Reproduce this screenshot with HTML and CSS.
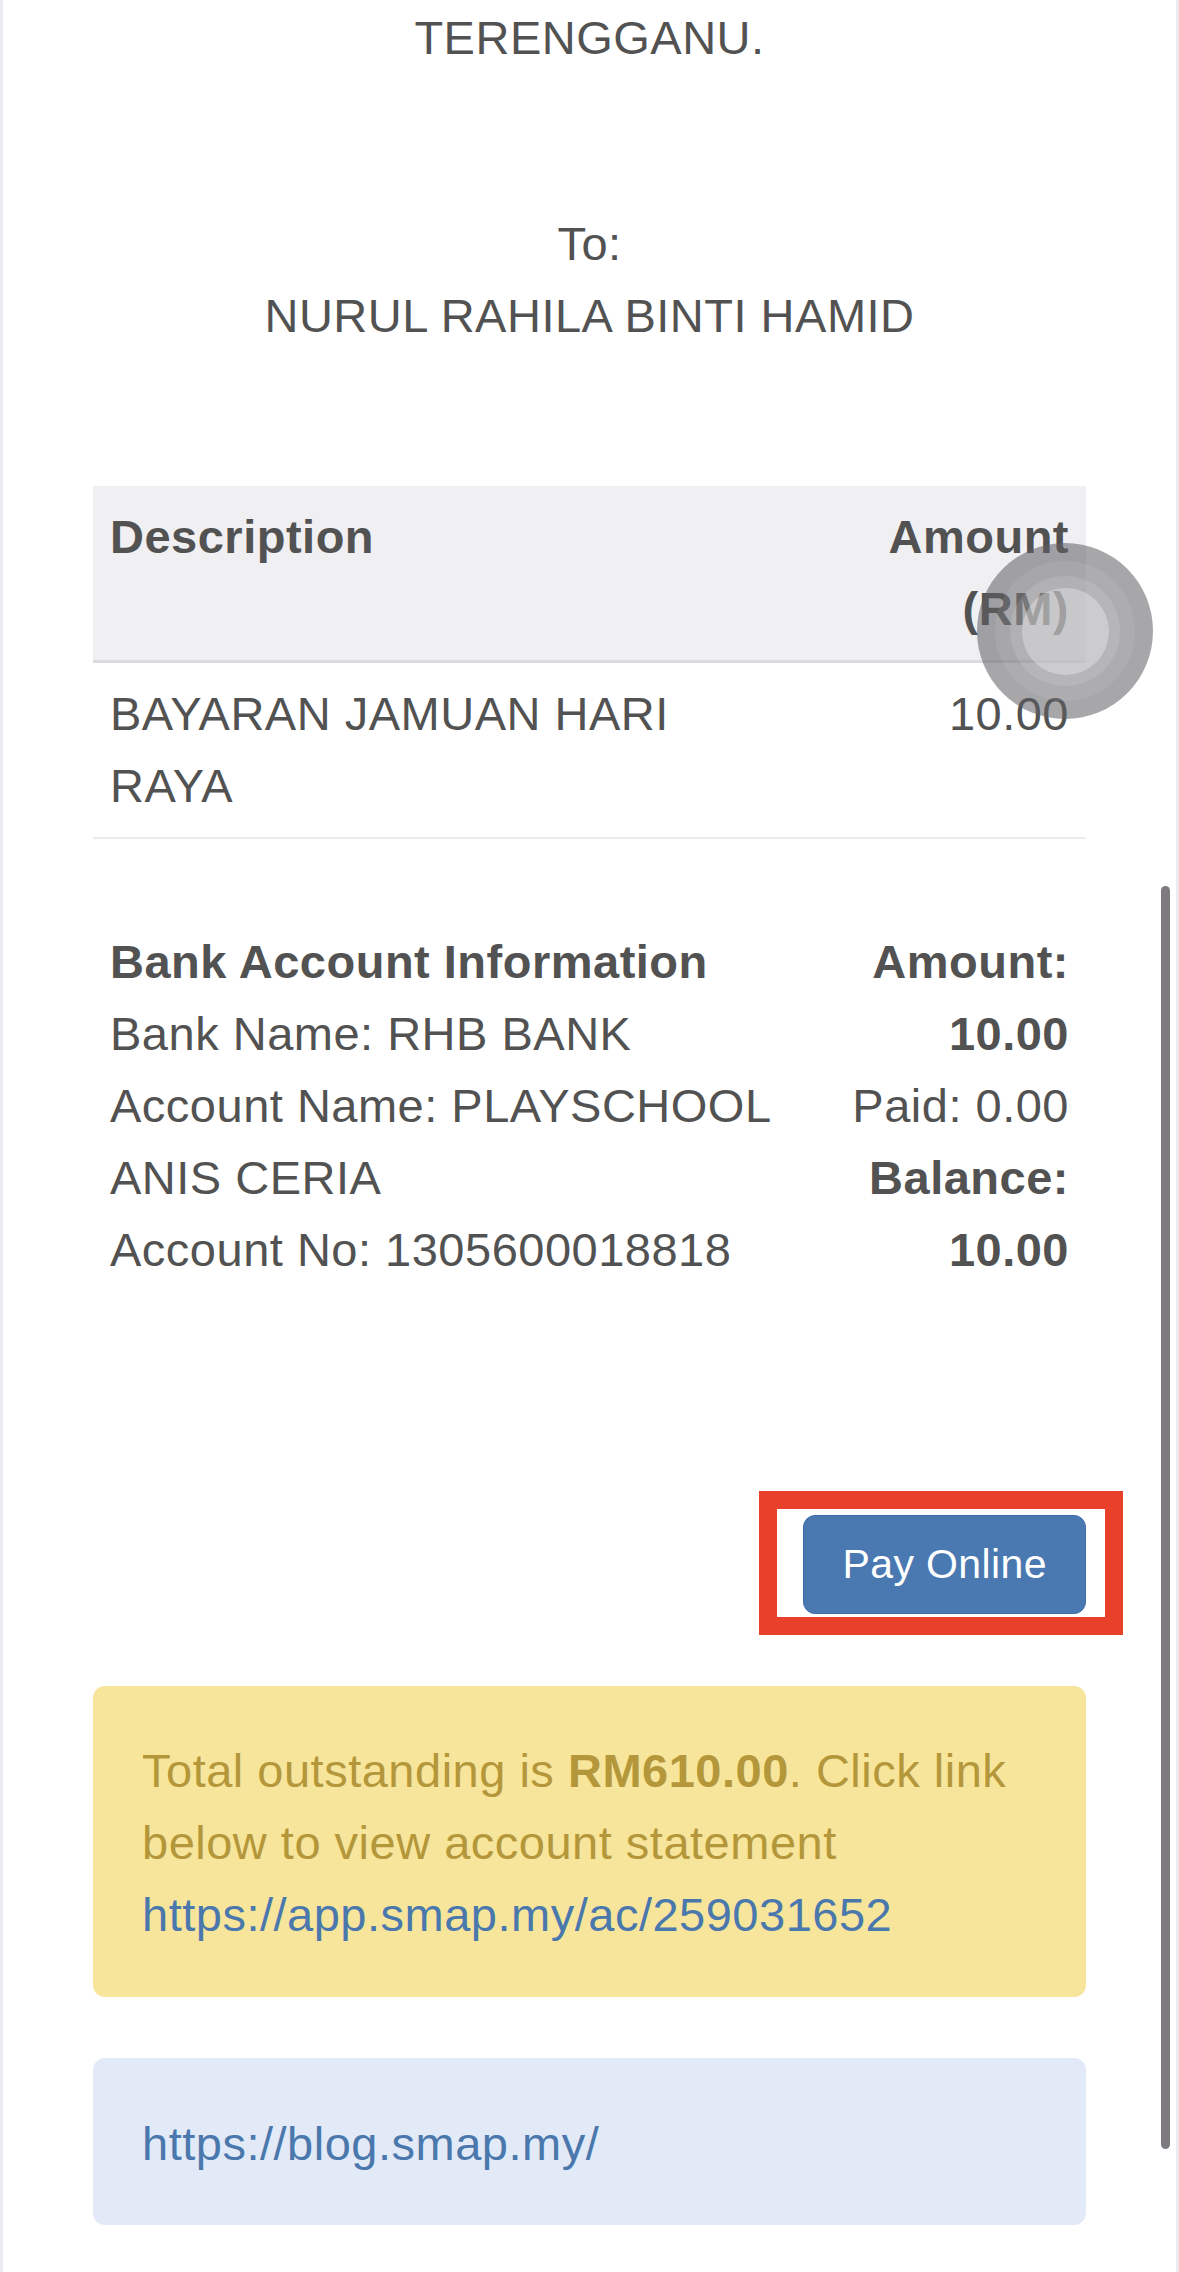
FILE: index.html
```html
<!DOCTYPE html>
<html lang="en">
<head>
    <meta charset="UTF-8">
    <meta name="viewport" content="width=device-width, initial-scale=1.0">
    <title>Invoice</title>
    <link rel="stylesheet" href="styles.css">
</head>
<body>
    <div class="page">
        <div class="address">TERENGGANU.</div>

        <div class="recipient">
            To:<br>
            NURUL RAHILA BINTI HAMID
        </div>

        <table class="invoice-table">
            <thead>
                <tr>
                    <th class="desc">Description</th>
                    <th class="amount">Amount<br>(RM)</th>
                </tr>
            </thead>
            <tbody>
                <tr>
                    <td class="desc">BAYARAN JAMUAN HARI RAYA</td>
                    <td class="amount">10.00</td>
                </tr>
            </tbody>
        </table>

        <div class="bank">
            <div class="bank-info">
                <strong>Bank Account Information</strong><br>
                Bank Name: RHB BANK<br>
                Account Name: PLAYSCHOOL ANIS CERIA<br>
                Account No: 1305600018818
            </div>
            <div class="bank-totals">
                <strong>Amount:</strong><br>
                <strong>10.00</strong><br>
                Paid: 0.00<br>
                <strong>Balance:</strong><br>
                <strong>10.00</strong>
            </div>
        </div>

        <div class="actions">
            <div class="pay-wrap">
                <button class="pay-btn">Pay Online</button>
                <span class="highlight"></span>
            </div>
        </div>

        <div class="alert alert-warning">
            Total outstanding is <strong>RM610.00</strong>. Click link below to view account statement
            <a href="#">https://app.smap.my/ac/259031652</a>
        </div>

        <div class="alert alert-info">
            <a href="#">https://blog.smap.my/</a>
        </div>

        <!-- phone overlays -->
        <div class="touch">
            <div class="touch-ring">
                <div class="touch-core"></div>
            </div>
        </div>
        <div class="scroll-indicator"></div>
    </div>
</body>
</html>
```

FILE: styles.css
```css
* {
    box-sizing: border-box;
}

body {
    margin: 0;
    background: #ececf0;
    font-family: 'Liberation Sans', Arial, Helvetica, sans-serif;
    font-size: 47px;
    line-height: 72px;
    letter-spacing: 0.5px;
    color: #525252;
}

.page {
    position: relative;
    margin: 0 3px;
    min-height: 2272px;
    background: #fff;
    padding: 2px 90px 0;
}

.address,
.recipient {
    text-align: center;
}

.recipient {
    margin-top: 134px;
}

.invoice-table {
    width: 100%;
    margin-top: 134px;
    border-collapse: collapse;
}

.invoice-table th,
.invoice-table td {
    padding: 15px 17px;
    text-align: left;
    vertical-align: top;
}

.invoice-table th {
    background: #f0eff2;
    border-bottom: 3px solid #dcdcdf;
    font-weight: bold;
}

.invoice-table td {
    border-bottom: 2px solid #ececee;
}

.invoice-table .desc {
    width: 634px;
}

.invoice-table .amount {
    text-align: right;
}

.bank {
    display: grid;
    grid-template-columns: 720px 1fr;
    margin-top: 87px;
    padding: 0 17px;
}

.bank-totals {
    text-align: right;
}

.actions {
    display: flex;
    justify-content: flex-end;
    margin-top: 229px;
}

.pay-wrap {
    position: relative;
}

.pay-btn {
    display: block;
    font-family: inherit;
    font-size: 41px;
    line-height: 57px;
    letter-spacing: 0.4px;
    padding: 20px 38px;
    color: #fff;
    background: #4a79b2;
    border: 1px solid #3e6ca6;
    border-radius: 12px;
}

.highlight {
    position: absolute;
    top: -24px;
    right: -37px;
    bottom: -21px;
    left: -44px;
    border: 18px solid #e8402a;
}

.alert {
    border-radius: 12px;
}

.alert a {
    color: #4a78ad;
    text-decoration: none;
}

.alert-warning {
    margin-top: 72px;
    padding: 49px 40px 46px 49px;
    background: #f7e59c;
    color: #b4973a;
}

.alert-info {
    margin-top: 61px;
    padding: 50px 49px 45px;
    background: #e2eaf8;
}

.touch {
    position: absolute;
    left: 974px;
    top: 543px;
    width: 176px;
    height: 176px;
    border-radius: 50%;
    background: rgba(95, 95, 100, 0.55);
    display: flex;
    align-items: center;
    justify-content: center;
}

.touch-ring {
    width: 110px;
    height: 110px;
    border-radius: 50%;
    background: rgba(255, 255, 255, 0.18);
    box-shadow: 0 0 0 15px rgba(255, 255, 255, 0.08);
    display: flex;
    align-items: center;
    justify-content: center;
}

.touch-core {
    width: 87px;
    height: 87px;
    border-radius: 50%;
    background: rgba(255, 255, 255, 0.3);
}

.scroll-indicator {
    position: absolute;
    left: 1158px;
    top: 886px;
    width: 9px;
    height: 1263px;
    border-radius: 5px;
    background: #7d7b80;
}
```
